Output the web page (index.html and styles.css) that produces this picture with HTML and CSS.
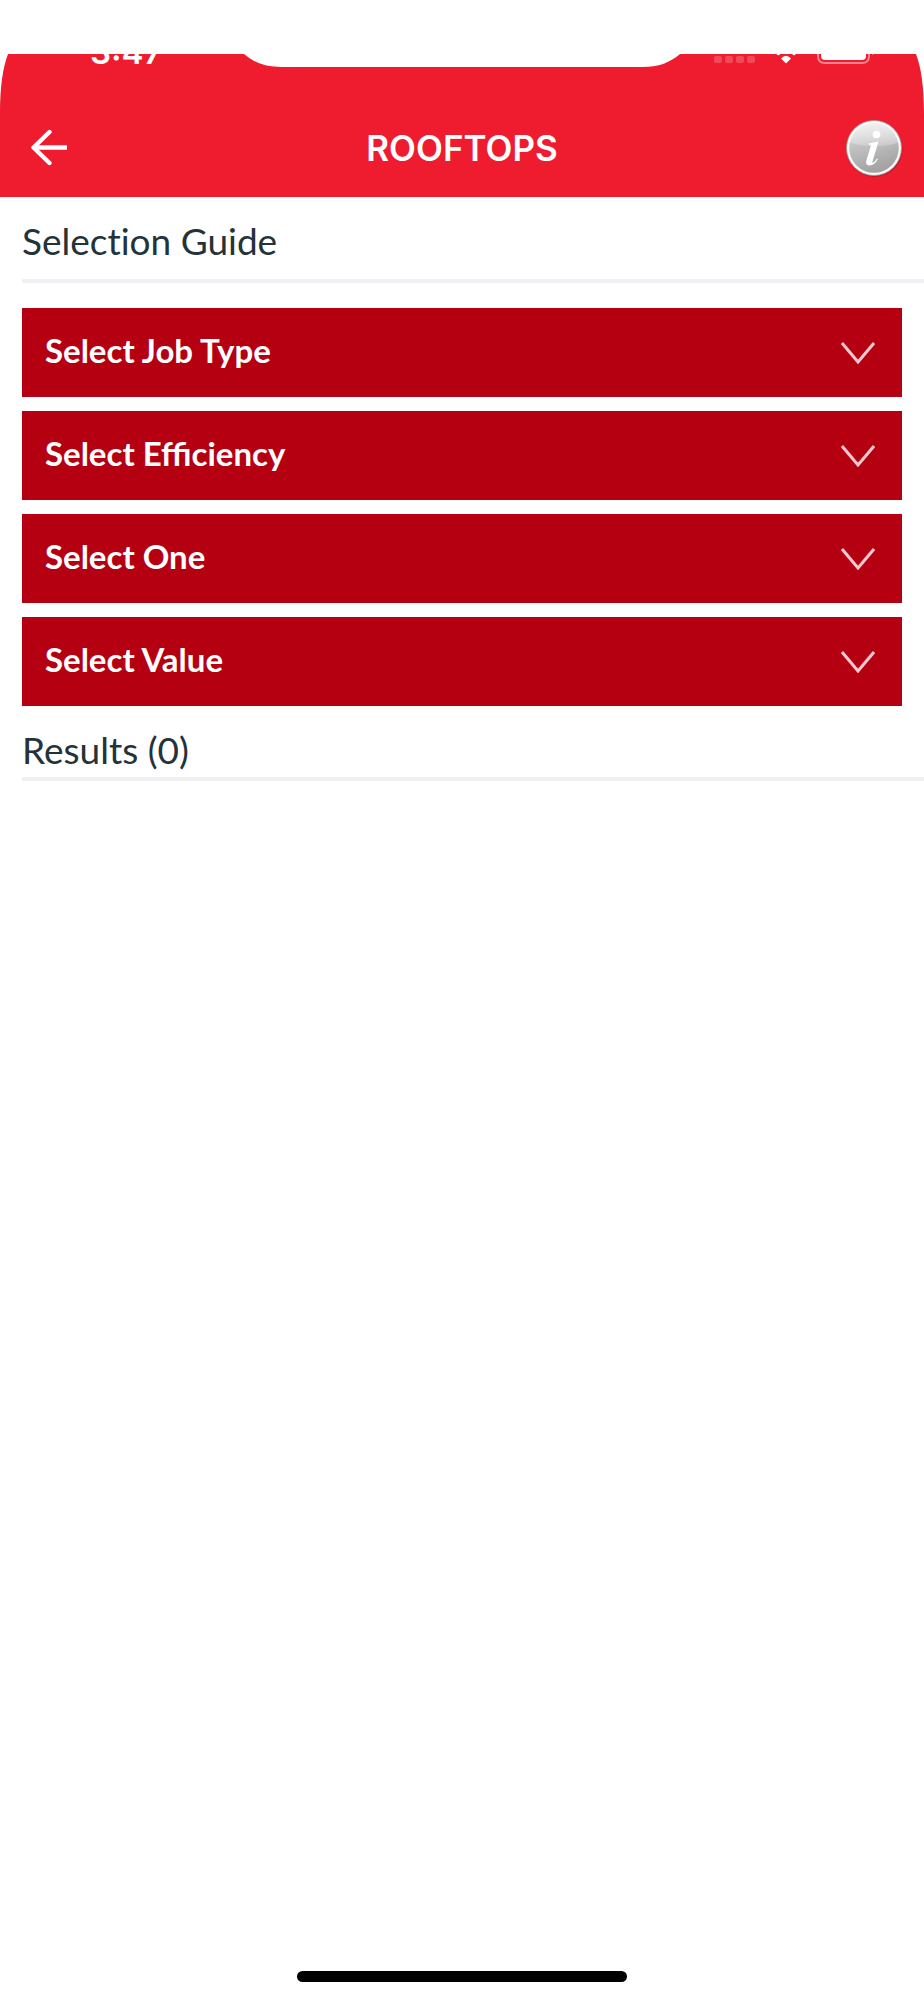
FILE: index.html
```html
<!DOCTYPE html>
<html lang="en">
<head>
  <meta charset="utf-8">
  <meta name="viewport" content="width=device-width, initial-scale=1">
  <title>Rooftops</title>
  <link rel="stylesheet" href="styles.css">
</head>
<body>
  <header class="header">
    <svg class="corner corner-left" viewBox="0 0 8 60" aria-hidden="true"><path d="M0 0H8C3 13 0 32 0 60Z"/></svg>
    <svg class="corner corner-right" viewBox="0 0 8 60" aria-hidden="true"><path d="M8 0H0C5 13 8 32 8 60Z"/></svg>
    <div class="status">
      <span class="time">3:47</span>
      <svg class="notch" viewBox="0 0 436 13" aria-hidden="true"><path d="M0 0H436C425 9 415 13 398 13H38C21 13 11 9 0 0Z"/></svg>
      <div class="indicators">
        <svg width="160" height="13" viewBox="0 0 160 13" aria-hidden="true">
          <g fill="#fff" fill-opacity=".2">
            <rect x="0" y="2" width="8" height="7" rx="2"/>
            <rect x="11" y="2" width="8" height="7" rx="2"/>
            <rect x="22" y="2" width="8" height="7" rx="2"/>
            <rect x="33" y="2" width="8" height="7" rx="2"/>
          </g>
          <path fill="#fff" d="M67 4.500Q72 -1 77 4.500L72 9.500ZM62 0H66L65 1.500ZM78 0H82L80 1.500Z"/>
          <path fill="none" stroke="#fff" stroke-opacity=".45" stroke-width="2" d="M104 -1V2Q104 9 111 9H148Q155 9 155 2V-1"/>
          <path fill="#fff" d="M107 0H152V2Q152 6 148 6H111Q107 6 107 2Z"/>
          <path fill="#fff" fill-opacity=".45" d="M158 0H160L158 1Z"/>
        </svg>
      </div>
    </div>
    <div class="toolbar">
      <button class="icon-button back" type="button" aria-label="Back">
        <svg width="37" height="37" viewBox="0 0 37 37" fill="none" stroke="#fff" aria-hidden="true">
          <path stroke-width="4.600" d="M3 18.500H37"/>
          <path stroke-width="4.400" stroke-linecap="round" stroke-linejoin="round" d="M19.500 3L3.500 18.500L19.500 34"/>
        </svg>
      </button>
      <h1 class="title">ROOFTOPS</h1>
      <button class="icon-button info" type="button" aria-label="Information">
        <svg width="60" height="60" viewBox="0 0 60 60" aria-hidden="true">
          <defs>
            <linearGradient id="face" x1="0" y1="0" x2="0.300" y2="1">
              <stop offset="0" stop-color="#dedede"/>
              <stop offset="1" stop-color="#a3a3a3"/>
            </linearGradient>
            <linearGradient id="gloss" x1="0" y1="0" x2="0" y2="1">
              <stop offset="0" stop-color="#fff" stop-opacity=".65"/>
              <stop offset="1" stop-color="#fff" stop-opacity=".22"/>
            </linearGradient>
          </defs>
          <circle cx="30.500" cy="31" r="28" fill="#8b1520" fill-opacity=".45"/>
          <circle cx="30" cy="30" r="27.500" fill="#f8f8f8" stroke="#999" stroke-width=".8"/>
          <circle cx="30" cy="30" r="24.800" fill="url(#face)"/>
          <path fill="url(#gloss)" d="M5.800 24.500A24.800 24.800 0 0 1 54.200 24.500C44 28 37 28 30 28C21 28 13 27 5.800 24.500Z"/>
          <circle cx="32.500" cy="16.500" r="3.800" fill="#fff"/>
          <path fill="#fff" d="M24.500 25.500L34.500 23.500L28.500 43.500Q28 45.500 29.500 44.500Q31.500 43 33 40.500L34 41Q30 48 25 47.500Q21 47 22.500 42L26.500 29Q27.500 26.500 24.500 26.500Z"/>
        </svg>
      </button>
    </div>
  </header>

  <main class="main">
    <h2 class="heading heading-guide">Selection Guide</h2>
    <form class="filters">
      <div class="field">
        <select class="select" aria-label="Job type"><option>Select Job Type</option></select>
        <svg class="chevron" viewBox="0 0 34 22" aria-hidden="true"><path d="M1 1L17 20L33 1"/></svg>
      </div>
      <div class="field">
        <select class="select" aria-label="Efficiency"><option>Select Efficiency</option></select>
        <svg class="chevron" viewBox="0 0 34 22" aria-hidden="true"><path d="M1 1L17 20L33 1"/></svg>
      </div>
      <div class="field">
        <select class="select" aria-label="Option"><option>Select One</option></select>
        <svg class="chevron" viewBox="0 0 34 22" aria-hidden="true"><path d="M1 1L17 20L33 1"/></svg>
      </div>
      <div class="field">
        <select class="select" aria-label="Value"><option>Select Value</option></select>
        <svg class="chevron" viewBox="0 0 34 22" aria-hidden="true"><path d="M1 1L17 20L33 1"/></svg>
      </div>
    </form>
    <h2 class="heading heading-results">Results (0)</h2>
  </main>

  <footer class="home"><div class="home-bar"></div></footer>
</body>
</html>
```

FILE: styles.css
```css
* {
  box-sizing: border-box;
}

body {
  margin: 0;
  min-height: 100vh;
  padding-top: 54px;
  display: flex;
  flex-direction: column;
  background: #fff;
  color: #24323a;
  font-family: Lato, "Open Sans", sans-serif;
}

.header {
  position: relative;
  background: #ee1c2e;
  color: #fff;
  font-family: Inter, Roboto, sans-serif;
}

.corner {
  position: absolute;
  top: 0;
  width: 8px;
  height: 60px;
  fill: #fff;
}

.corner-left {
  left: 0;
}

.corner-right {
  right: 0;
}

.status {
  display: grid;
  grid-template-columns: 1fr 436px 1fr;
  grid-template-rows: 13px;
  align-items: end;
  overflow: hidden;
}

.time {
  padding-left: 90px;
  font-size: 33px;
  line-height: 30px;
  font-weight: 600;
}

.notch {
  display: block;
  width: 436px;
  height: 13px;
  fill: #fff;
}

.indicators {
  display: flex;
  justify-content: flex-end;
  padding-right: 50px;
}

.toolbar {
  display: grid;
  grid-template-columns: 1fr auto 1fr;
  align-items: center;
  height: 130px;
  padding: 31px 20px 0;
}

.icon-button {
  display: flex;
  padding: 0;
  border: 0;
  background: none;
  cursor: pointer;
}

.back {
  justify-self: start;
  margin-left: 10px;
}

.info {
  justify-self: end;
}

.title {
  margin: 0;
  font-size: 35px;
  line-height: 44px;
  font-weight: 600;
}

.main {
  flex: 1;
  padding-left: 22px;
}

.heading {
  margin: 0;
  padding-top: 22px;
  border-bottom: 4px solid #eff1f4;
  font-size: 37px;
  line-height: 44px;
  font-weight: 400;
  font-variant-ligatures: none;
}

.heading-guide {
  padding-bottom: 16px;
}

.heading-results {
  padding-bottom: 5px;
}

.filters {
  display: grid;
  gap: 14px;
  padding: 25px 22px 0 0;
}

.field {
  display: grid;
  align-items: center;
}

.select,
.chevron {
  grid-area: 1 / 1;
}

.select {
  appearance: none;
  width: 100%;
  height: 89px;
  margin: 0;
  padding: 0 80px 6px 23px;
  border: 0;
  border-radius: 0;
  background: #b50012;
  color: #fff;
  font-family: inherit;
  font-size: 33px;
  font-weight: 700;
  cursor: pointer;
}

.chevron {
  justify-self: end;
  width: 34px;
  height: 22px;
  margin-right: 27px;
  fill: none;
  stroke: #f3c9cf;
  stroke-width: 3;
  pointer-events: none;
}

.home {
  display: flex;
  justify-content: center;
  padding-bottom: 18px;
}

.home-bar {
  width: 330px;
  height: 11px;
  border-radius: 6px;
  background: #000;
}
```
